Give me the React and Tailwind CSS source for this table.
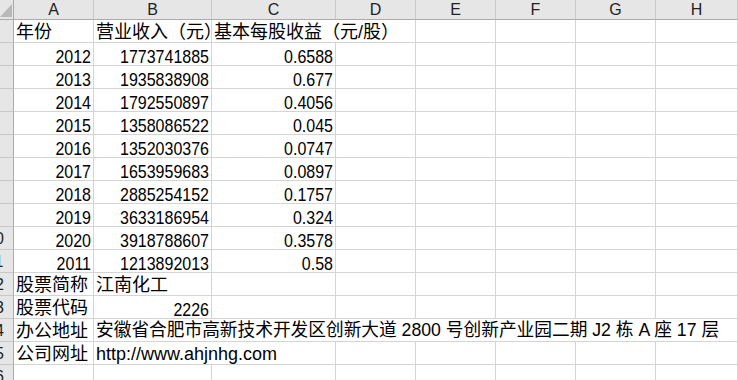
import React from 'react';

const LETTERS = ['A', 'B', 'C', 'D', 'E', 'F', 'G', 'H'];

const YEARS = [
  ['2012', '1773741885', '0.6588'],
  ['2013', '1935838908', '0.677'],
  ['2014', '1792550897', '0.4056'],
  ['2015', '1358086522', '0.045'],
  ['2016', '1352030376', '0.0747'],
  ['2017', '1653959683', '0.0897'],
  ['2018', '2885254152', '0.1757'],
  ['2019', '3633186954', '0.324'],
  ['2020', '3918788607', '0.3578'],
  ['2011', '1213892013', '0.58'],
];

const blank = (n) => Array.from({ length: n }, () => ({}));

// each row: list of cells; span = how many columns the text runs over
const rows = [
  [{ t: '年份' }, { t: '营业收入（元）' }, { t: '基本每股收益（元/股）', span: 2 }, ...blank(4)],
  ...YEARS.map(([y, r, e]) => [{ n: y }, { n: r }, { n: e }, ...blank(5)]),
  [{ t: '股票简称' }, { t: '江南化工' }, ...blank(6)],
  [{ t: '股票代码' }, { n: '2226' }, ...blank(6)],
  [{ t: '办公地址' }, { t: '安徽省合肥市高新技术开发区创新大道 2800 号创新产业园二期 J2 栋 A 座 17 层', span: 7, small: true }],
  [{ t: '公司网址' }, { t: 'http://www.ahjnhg.com', span: 2 }, ...blank(5)],
  blank(8),
];

const spanClass = {
  1: 'col-span-1',
  2: 'col-span-2',
  7: 'col-span-7',
};

const Cell = ({ cell }) => {
  const span = spanClass[cell.span || 1];
  if (cell.n) {
    return (
      <div className={`${span} h-[23px] border-r border-b border-[#d4d4d4] flex items-end justify-end pr-[2px] pb-[1px] overflow-hidden`}>
        <span className="font-['Liberation_Sans',sans-serif] text-[16px] leading-[13px] whitespace-nowrap inline-block origin-bottom scale-y-[1.18]">
          {cell.n}
        </span>
      </div>
    );
  }
  return (
    <div className={`${span} h-[23px] border-r border-b border-[#d4d4d4] flex items-end pl-[2px] overflow-hidden`}>
      {cell.t && (
        <span
          className={`font-['Liberation_Sans','Noto_Sans_CJK_SC',sans-serif] ${
            cell.small ? 'text-[17.7px]' : 'text-[18px]'
          } leading-none whitespace-nowrap pb-[1px]`}
        >
          {cell.t}
        </span>
      )}
    </div>
  );
};

export default function App() {
  return (
    <div className="w-[738px] h-[380px] overflow-hidden bg-white text-black">
      <div className="grid grid-cols-[14px_80px_118px_124px_80px_80px_80px_80px_82px] w-max">
        {/* corner */}
        <div className="h-[20px] bg-[#e6e6e6] border-r border-b border-[#ababab] overflow-hidden">
          <svg width="13" height="19" viewBox="0 0 13 19">
            <polygon points="12,4 12,17 0,17" fill="#b9b9b9" />
          </svg>
        </div>
        {LETTERS.map((l) => (
          <div
            key={l}
            className="h-[20px] bg-[#e6e6e6] border-r border-r-[#c8c8c8] border-b border-b-[#ababab] flex justify-center font-['Liberation_Sans',sans-serif] text-[16px] leading-[19px] text-[#222]"
          >
            {l}
          </div>
        ))}

        {rows.map((cells, i) => (
          <React.Fragment key={i}>
            <div className="h-[23px] bg-[#e6e6e6] border-r border-r-[#ababab] border-b border-b-[#c8c8c8] overflow-hidden">
              <div className="w-[26px] -ml-[18px] text-center font-['Liberation_Sans',sans-serif] text-[16px] leading-[22px] pt-[1px] text-[#222]">
                {i + 1}
              </div>
            </div>
            {cells.map((c, j) => (
              <Cell key={j} cell={c} />
            ))}
          </React.Fragment>
        ))}
      </div>
    </div>
  );
}
